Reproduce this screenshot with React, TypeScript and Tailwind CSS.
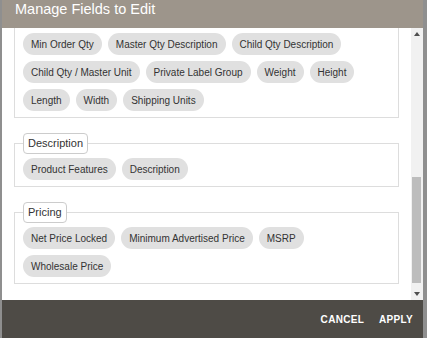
import React from 'react';

const mainFields = [
  ['Min Order Qty', 'Master Qty Description', 'Child Qty Description'],
  ['Child Qty / Master Unit', 'Private Label Group', 'Weight', 'Height'],
  ['Length', 'Width', 'Shipping Units'],
];

const groups = [
  { title: 'Description', fields: ['Product Features', 'Description'] },
  { title: 'Pricing', fields: ['Net Price Locked', 'Minimum Advertised Price', 'MSRP', 'Wholesale Price'] },
];

function Chip({ label }: { label: string }) {
  return (
    <span className="h-[22px] px-2 flex items-center rounded-full bg-[#e0e0e0] text-[10px] text-[#333] whitespace-nowrap">
      {label}
    </span>
  );
}

function ScrollBar() {
  return (
    <div className="w-[12px] flex flex-col bg-[#f1f1f1]">
      <div className="h-[12px] flex items-center justify-center">
        <svg width="6" height="4" viewBox="0 0 6 4">
          <polygon points="3,0 6,4 0,4" fill="#505050" />
        </svg>
      </div>
      <div className="flex-1 px-[1px]">
        <div className="mt-[137px] h-[106px] w-[9px] bg-[#bdbdbd]" />
      </div>
      <div className="h-[12px] flex items-center justify-center">
        <svg width="6" height="4" viewBox="0 0 6 4">
          <polygon points="0,0 6,0 3,4" fill="#505050" />
        </svg>
      </div>
    </div>
  );
}

export default function App() {
  return (
    <div className="w-[427px] h-[338px] bg-[#8f8f8f] flex" style={{ fontFamily: '"Liberation Sans", Arial, sans-serif' }}>
      <div className="ml-[2px] w-[421px] h-full flex flex-col bg-white">
        {/* header */}
        <div className="h-[28px] shrink-0 bg-[#9d958b] pl-[13px] pt-[1px]">
          <h1 className="text-[14.5px] leading-4 text-white">Manage Fields to Edit</h1>
        </div>

        {/* scrolled body */}
        <div className="flex-1 flex min-h-0">
          <div className="flex-1 overflow-hidden">
            <div className="-mt-[23px] px-3">
              <div className="border-x border-b border-[#ddd] px-2 pb-[6px] flex flex-col gap-[6px]">
                {/* row scrolled mostly out of view */}
                <div className="flex">
                  <span className="h-[22px] w-[57px] rounded-full bg-[#e0e0e0]" />
                </div>
                {mainFields.map((row, i) => (
                  <div key={i} className="flex gap-[6px]">
                    {row.map(f => <Chip key={f} label={f} />)}
                  </div>
                ))}
              </div>

              {groups.map(g => (
                <fieldset key={g.title} className="mt-[15px] border border-[#ddd] px-2 pt-1 pb-[6px]">
                  <legend className="block h-[21px] px-[4px] leading-[19px] border border-[#ccc] rounded-[4px] bg-white text-[11px] text-[#333]">
                    {g.title}
                  </legend>
                  <div className="flex flex-wrap gap-[6px]">
                    {g.fields.map(f => <Chip key={f} label={f} />)}
                  </div>
                </fieldset>
              ))}
            </div>
          </div>
          <ScrollBar />
        </div>

        {/* footer */}
        <div className="h-[38px] shrink-0 bg-[#4e4b46] flex items-center justify-end gap-[15px] pr-[10px]">
          <button className="text-[10px] font-bold tracking-[0.3px] text-white">CANCEL</button>
          <button className="text-[10px] font-bold tracking-[0.3px] text-white">APPLY</button>
        </div>
      </div>
    </div>
  );
}
